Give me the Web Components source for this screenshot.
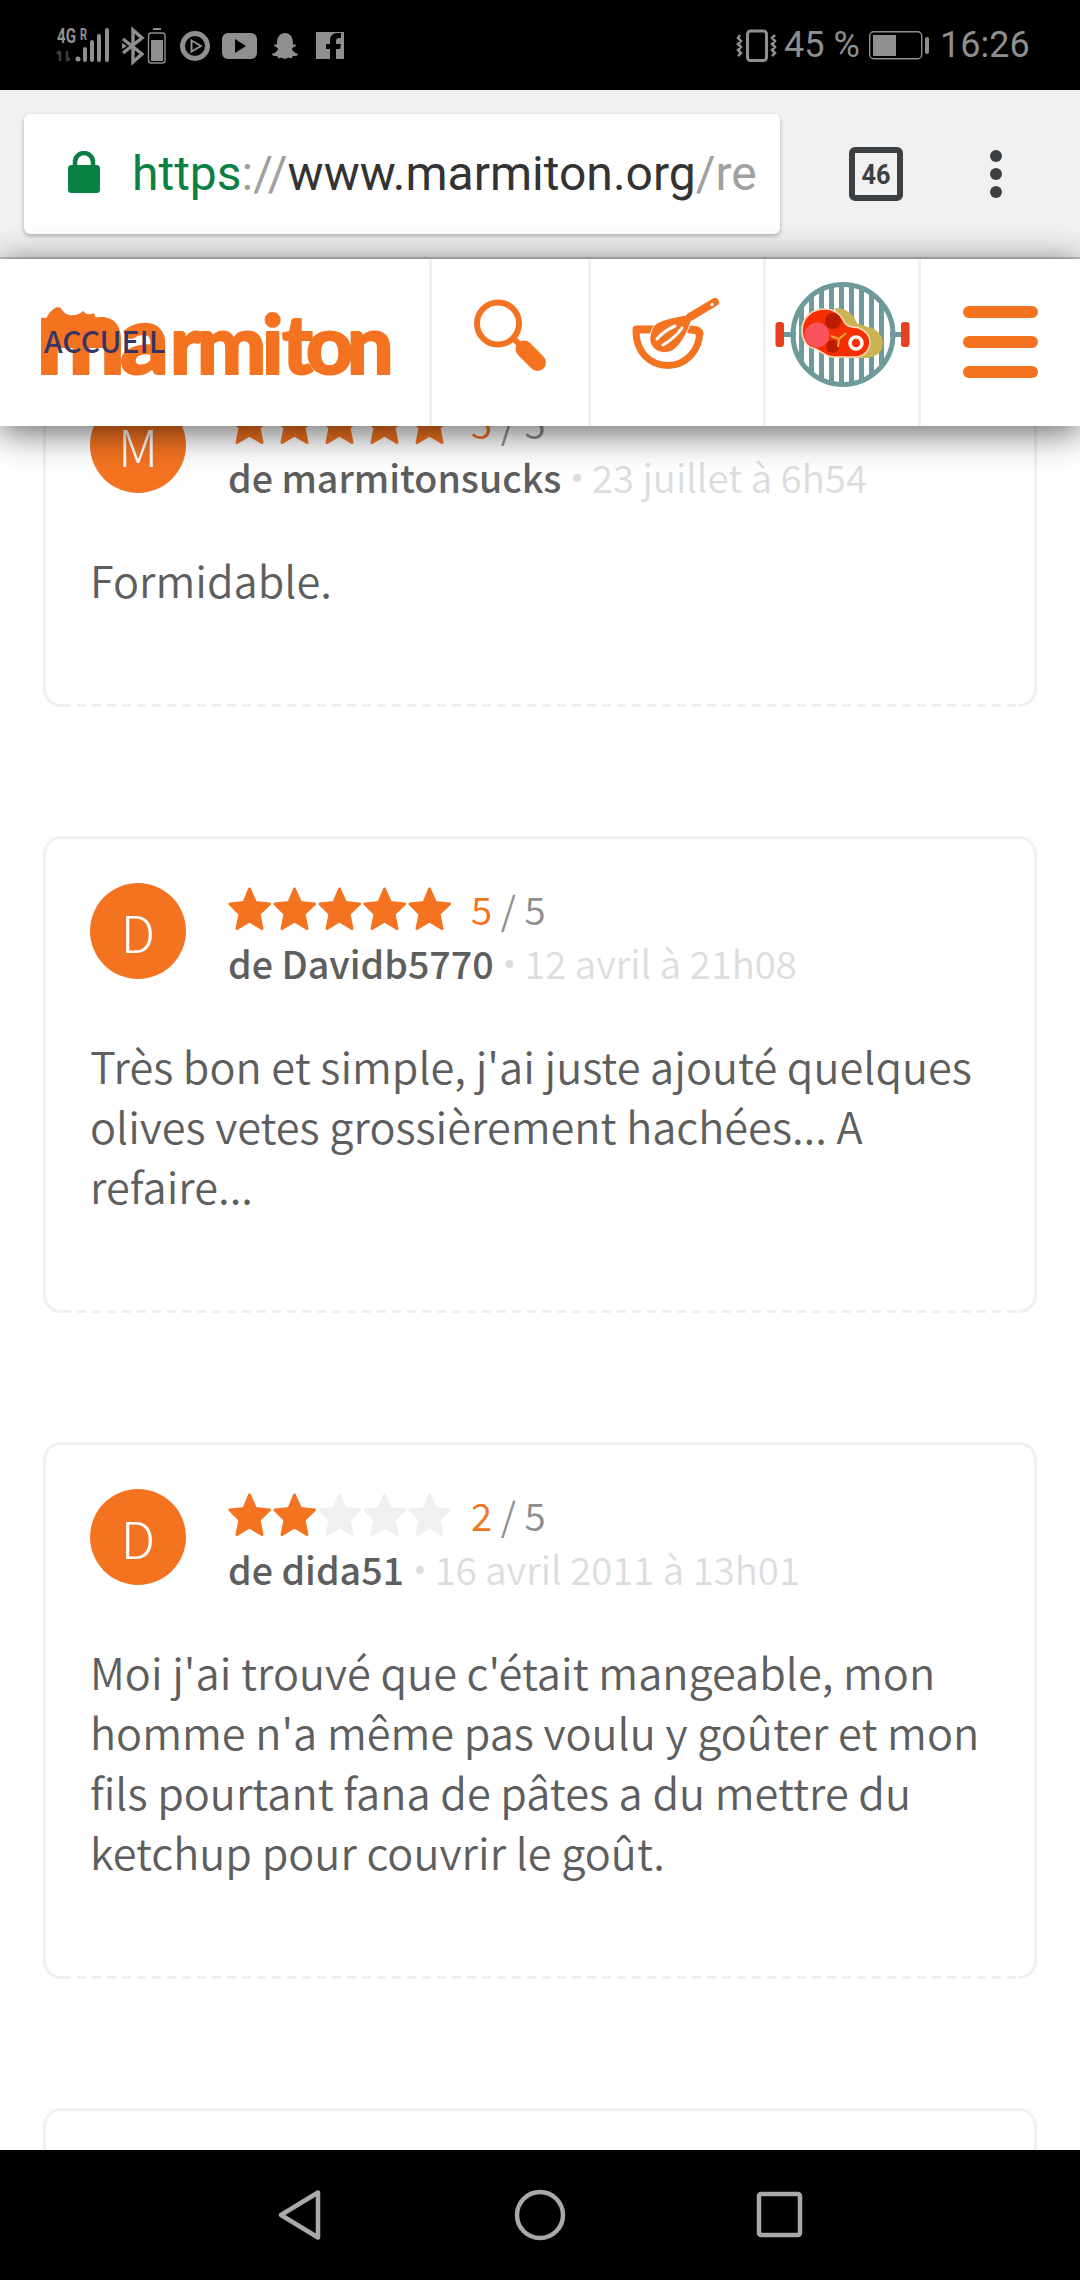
<!DOCTYPE html>
<html lang="fr">
<head>
<meta charset="utf-8">
<title>Marmiton</title>
<style>
  html, body { margin: 0; padding: 0; background: #fff; }
  body { width: 1080px; height: 2280px; overflow: hidden; display: flex; flex-direction: column; font-family: "Noto Sans CJK SC", "Noto Sans", sans-serif; }
</style>
</head>
<body>
<phone-status></phone-status>
<browser-toolbar url-host="www.marmiton.org" tabs="46"></browser-toolbar>
<site-nav></site-nav>
<review-feed>
  <review-card initial="M" rating="5" author="marmitonsucks" date="23 juillet à 6h54">Formidable.</review-card>
  <review-card initial="D" rating="5" author="Davidb5770" date="12 avril à 21h08">Très bon et simple, j'ai juste ajouté quelques olives vetes grossièrement hachées... A refaire...</review-card>
  <review-card initial="D" rating="2" author="dida51" date="16 avril 2011 à 13h01">Moi j'ai trouvé que c'était mangeable, mon homme n'a même pas voulu y goûter et mon fils pourtant fana de pâtes a du mettre du ketchup pour couvrir le goût.</review-card>
  <review-card></review-card>
</review-feed>
<phone-nav></phone-nav>

<script>
// ---------------------------------------------------------------------------
// Base
// ---------------------------------------------------------------------------

/** Renders css() and template() into an open shadow root on connect. */
class BaseElement extends HTMLElement {
  constructor() {
    super();
    this.attachShadow({ mode: 'open' });
  }
  connectedCallback() {
    this.shadowRoot.innerHTML = `<style>${this.css()}</style>${this.template()}`;
  }
  css() { return ''; }
  template() { return ''; }
}

const ORANGE = '#f47321';

// ---------------------------------------------------------------------------
// Android chrome
// ---------------------------------------------------------------------------

class PhoneStatus extends BaseElement {
  css() {
    return `
      :host { display: flex; flex: none; height: 90px; background: #000; color: #8f8f8f; font: 36px/90px Roboto, sans-serif; }
      svg { display: block; flex: none; }
      .level { flex: none; width: 74px; margin-left: 6px; white-space: nowrap; }
      .time { flex: none; width: 86px; margin-left: 11px; }
    `;
  }
  template() {
    return `
      <svg width="736" height="90" viewBox="0 0 736 90">
        <g fill="#8f8f8f">
          <text x="57" y="43" font-family="Roboto" font-weight="700" font-size="20" textLength="19" lengthAdjust="spacingAndGlyphs">4G</text>
          <text x="80" y="40" font-family="Roboto" font-weight="700" font-size="16" textLength="7" lengthAdjust="spacingAndGlyphs">R</text>
          <circle cx="78" cy="59" r="2.500"/>
          <rect x="83" y="47" width="4" height="15" rx="2"/>
          <rect x="90" y="40" width="4" height="22" rx="2"/>
          <rect x="97" y="34" width="4" height="28" rx="2"/>
          <rect x="105" y="28" width="4" height="34" rx="2"/>
        </g>
        <path d="M60 51v10M57 54l3-3M67 61V51M67 61l3-3" stroke="#3d3d3d" stroke-width="2.500" fill="none"/>
        <path d="M123 39l19 15-9 8V30l9 8-19 15" fill="none" stroke="#8f8f8f" stroke-width="3.400"/>
        <path d="M122 43l5 3-5 3z" fill="#8f8f8f"/>
        <g fill="#8f8f8f">
          <rect x="153" y="28" width="8" height="2"/>
          <rect x="148.500" y="33" width="16.500" height="30" rx="2.500" fill="none" stroke="#8f8f8f" stroke-width="1.400"/>
          <rect x="151" y="40" width="12" height="21"/>
        </g>
        <circle cx="195" cy="46" r="12.500" fill="none" stroke="#8f8f8f" stroke-width="5"/>
        <path d="M191.500 40.500l9.500 5.500-9.500 5.500z" fill="none" stroke="#8f8f8f" stroke-width="2"/>
        <rect x="222" y="33" width="35" height="26" rx="6" fill="#8f8f8f"/>
        <path d="M235 39l11 7-11 7z" fill="#000"/>
        <path d="M285 33c6 0 8 5 8 11 0 1 3 0 3 1 0 2-4 2-4 4 0 1 2 4 6 5 0 2-3 2-5 2-1 2-2 3-3 2-3-1-4 1-5 1s-2-2-5-1c-1 1-2 0-3-2-2 0-5 0-5-2 4-1 6-4 6-5 0-2-4-2-4-4 0-1 3 0 3-1 0-6 2-11 8-11z" fill="#8f8f8f"/>
        <path d="M316 32h28v27h-8V49h4l1-5h-5v-3c0-2 1-3 3-3h2v-5h-4c-4 0-7 3-7 7v4h-4v5h4v10h-14z" fill="#8f8f8f"/>
      </svg>
      <svg width="42" height="90" viewBox="736 0 42 90">
        <rect x="747.500" y="31" width="19" height="29.500" rx="3" fill="none" stroke="#8f8f8f" stroke-width="3"/>
        <path d="M740 35l-2 3 3 3-3 3 3 3-3 3 3 3-3 3M775 35l-3 3 3 3-3 3 3 3-3 3 3 3-3 3" fill="none" stroke="#8f8f8f" stroke-width="2.500"/>
      </svg>
      <span class="level">45 %</span>
      <svg width="60" height="90" viewBox="869 0 60 90" style="margin-left:11px">
        <rect x="869.700" y="31.700" width="52" height="27" rx="4" fill="none" stroke="#8f8f8f" stroke-width="1.400"/>
        <rect x="873" y="35" width="23" height="21" fill="#8f8f8f"/>
        <rect x="925" y="37" width="4" height="17" rx="2" fill="#8f8f8f"/>
      </svg>
      <span class="time">16:26</span>
    `;
  }
}
customElements.define('phone-status', PhoneStatus);

class BrowserToolbar extends BaseElement {
  css() {
    return `
      :host { display: flex; align-items: center; flex: none; box-sizing: border-box; height: 169px; padding: 0 0 0 24px; background: #f1f1f1; border-bottom: 2px solid #c4c4c4; }
      .omnibox { display: flex; align-items: center; box-sizing: border-box; width: 756px; height: 120px; padding-left: 44px; background: #fff; border-radius: 6px; box-shadow: 0 2px 4px rgba(0,0,0,.28); overflow: hidden; white-space: nowrap; font: 48px/120px Roboto, sans-serif; color: #333; }
      .omnibox svg { flex: none; margin-right: 32px; margin-top: -4px; }
      .scheme { color: #0b8043; }
      .dim { color: #a0a0a0; }
      .tabs { flex: none; margin-left: 69px; display: block; }
      .more { flex: none; margin-left: 87px; display: block; }
    `;
  }
  template() {
    const host = this.getAttribute('url-host');
    const tabs = this.getAttribute('tabs');
    return `
      <div class="omnibox">
        <svg width="32" height="42" viewBox="0 0 32 42">
          <path d="M7 17v-6a9 9 0 0 1 18 0v6" fill="none" stroke="#0b8043" stroke-width="4.500"/>
          <rect x="0" y="14" width="32" height="28" rx="3.500" fill="#0b8043"/>
        </svg>
        <span><span class="scheme">https</span><span class="dim">://</span>${host}<span class="dim">/re</span></span>
      </div>
      <svg class="tabs" width="54" height="54" viewBox="0 0 54 54">
        <rect x="3" y="3" width="48" height="48" rx="3" fill="none" stroke="#3c4043" stroke-width="6"/>
        <text x="27" y="37" text-anchor="middle" fill="#3c4043" font-family="Roboto" font-weight="700" font-size="28" textLength="29" lengthAdjust="spacingAndGlyphs">${tabs}</text>
      </svg>
      <svg class="more" width="12" height="48" viewBox="0 0 12 48">
        <circle cx="6" cy="6" r="6" fill="#3c4043"/><circle cx="6" cy="24" r="6" fill="#3c4043"/><circle cx="6" cy="42" r="6" fill="#3c4043"/>
      </svg>
    `;
  }
}
customElements.define('browser-toolbar', BrowserToolbar);

class PhoneNav extends BaseElement {
  css() {
    return `
      :host { display: block; flex: none; height: 130px; background: #000; position: relative; z-index: 3; }
      svg { display: block; }
    `;
  }
  template() {
    return `
      <svg width="1080" height="130" viewBox="0 2150 1080 130" fill="none" stroke="#a9a9a9" stroke-width="4.500" stroke-linejoin="round">
        <path d="M318 2192.500v45l-37-22.500z"/>
        <circle cx="540" cy="2215" r="23"/>
        <rect x="759" y="2194" width="41" height="41" rx="2"/>
      </svg>
    `;
  }
}
customElements.define('phone-nav', PhoneNav);

// ---------------------------------------------------------------------------
// Site header
// ---------------------------------------------------------------------------

class SiteNav extends BaseElement {
  css() {
    return `
      :host { display: flex; flex: none; height: 167px; position: relative; z-index: 2; background: #fff; box-shadow: 0 6px 34px rgba(0,0,0,.62); }
      .cell { flex: none; border-left: 3px solid #f1f1f1; box-sizing: border-box; }
      .cell svg { display: block; }
      .logo { position: relative; flex: none; width: 429px; }
      .logo svg { display: block; }
      /* the unstyled link label sits on top of the logo in the reference */
      .logo a { position: absolute; left: 44px; top: 59px; font: 500 30px/44px "Noto Sans CJK SC", sans-serif; color: #353465; }
    `;
  }
  template() {
    return `
      <div class="logo">
        <svg width="429" height="167" viewBox="0 259 429 167">
          <path fill="${ORANGE}" d="M43 348C42 325 46 312 57 307L61 308C64 316 76 318 83 311C86 315 90 315 94 313C96 322 104 328 111 328L118 337V348Z"/>
          <text y="374" x="36 120 170 197 262 282 306 347" fill="${ORANGE}" stroke="${ORANGE}" stroke-width="2" stroke-linejoin="round" font-family="Lato" font-weight="900" font-size="82"><tspan font-size="106">m</tspan><tspan font-size="96">a</tspan>rmiton</text>
        </svg>
        <a>ACCUEIL</a>
      </div>
      <div class="cell" style="width:159px">
        <svg width="156" height="167" viewBox="432 259 156 167">
          <circle cx="498" cy="323.500" r="21" fill="none" stroke="${ORANGE}" stroke-width="6"/>
          <path d="M515 340l7 7" stroke="${ORANGE}" stroke-width="6"/>
          <path d="M524 349l13.500 13.500" stroke="${ORANGE}" stroke-width="17" stroke-linecap="round"/>
        </svg>
      </div>
      <div class="cell" style="width:175px">
        <svg width="172" height="167" viewBox="591 259 172 167">
          <path d="M636 331C636 352 650 365.500 668 365.500C686 365.500 699.500 350 699.500 333" fill="none" stroke="${ORANGE}" stroke-width="7"/>
          <path d="M636.500 329.500h22M690 329.500c5 0 9 1 9.500 4" fill="none" stroke="${ORANGE}" stroke-width="8" stroke-linecap="round"/>
          <path d="M657 323C667 318 680 316 693 314C690 328 682 345 672 351C660 356 648 348 650 336C651 330 653 326 657 323Z" fill="${ORANGE}" stroke="#fff" stroke-width="1"/>
          <path d="M690 317L715 302" stroke="${ORANGE}" stroke-width="8" stroke-linecap="round"/>
          <path d="M657 339c5-6 11-10 18-13M663 345c7-4 14-10 19-17" stroke="#fff" stroke-width="3" stroke-linecap="round" fill="none"/>
          <circle cx="712" cy="304.500" r="1.700" fill="#fff"/>
        </svg>
      </div>
      <div class="cell" style="width:155px">
        <svg width="152" height="167" viewBox="766 259 152 167">
          <defs><clipPath id="g"><circle cx="843" cy="334.500" r="51"/></clipPath></defs>
          <g fill="#6f9a9b">
            <rect x="782" y="332" width="14" height="5"/><rect x="890" y="332" width="14" height="5"/>
            <g clip-path="url(#g)">
              <rect x="799" y="280" width="5" height="110"/><rect x="809" y="280" width="5" height="110"/><rect x="819" y="280" width="5" height="110"/><rect x="829" y="280" width="5" height="110"/><rect x="839" y="280" width="5" height="110"/><rect x="849" y="280" width="5" height="110"/><rect x="859" y="280" width="5" height="110"/><rect x="869" y="280" width="5" height="110"/><rect x="879" y="280" width="5" height="110"/>
            </g>
          </g>
          <circle cx="843" cy="334.500" r="50" fill="none" stroke="#6f9a9b" stroke-width="5"/>
          <rect x="775.500" y="322" width="8.500" height="25" rx="3" fill="#e8411f"/>
          <rect x="901" y="322" width="8.500" height="25" rx="3" fill="#e8411f"/>
          <path d="M835 308c10 0 18 5 22 15 6 4 16 3 22 10 5 6 5 14 1 19-4 4-9 6-14 6h-20z" fill="#cdb452"/>
          <path d="M825 309c9 0 16 6 20 14 4 6 9 3 14 5 7 3 11 8 11 14 0 8-6 15-15 15h-21c-9 0-13-7-21-9-6-1-11-9-11-17 0-14 10-22 23-22z" fill="#f52e04" stroke="#fbd9b8" stroke-width="1.700"/>
          <circle cx="817" cy="335" r="12.500" fill="#f9525a"/>
          <circle cx="833" cy="321" r="8" fill="#b91c00"/>
          <circle cx="832.500" cy="346.500" r="6.500" fill="#b91c00"/>
          <circle cx="856" cy="343" r="6" fill="#f52e04" stroke="#fff" stroke-width="3.500"/>
          <path d="M831 336l8 3 7-6M839 339l-1 8" fill="none" stroke="#e9a838" stroke-width="2"/>
        </svg>
      </div>
      <div class="cell" style="flex:1">
        <svg width="158" height="167" viewBox="921 259 158 167">
          <g fill="${ORANGE}">
            <rect x="963" y="306" width="75" height="12" rx="6"/>
            <rect x="963" y="336" width="75" height="12" rx="6"/>
            <rect x="963" y="366" width="75" height="12" rx="6"/>
          </g>
        </svg>
      </div>
    `;
  }
}
customElements.define('site-nav', SiteNav);

// ---------------------------------------------------------------------------
// Reviews
// ---------------------------------------------------------------------------

class StarRating extends BaseElement {
  css() {
    return `
      :host { display: inline-flex; gap: 2px; }
      svg { display: block; }
      .on { fill: ${ORANGE}; stroke: ${ORANGE}; }
      .off { fill: #f0f0f0; stroke: #f0f0f0; }
    `;
  }
  template() {
    const value = Number(this.getAttribute('value'));
    return [1, 2, 3, 4, 5].map((n) => `
      <svg width="43" height="43" viewBox="0 0 43 43">
        <path class="${n <= value ? 'on' : 'off'}" stroke-width="3" stroke-linejoin="round"
          d="M21.500 2l6 13.500 14 1.500-10.500 10 3 14.500-12.500-7.500-12.500 7.500 3-14.500L2 17l14-1.500z"/>
      </svg>`).join('');
  }
}
customElements.define('star-rating', StarRating);

class ReviewCard extends BaseElement {
  css() {
    return `
      :host { display: block; position: relative; box-sizing: border-box; width: 994px; padding: 44px 44px 95px; background: #fff; border: 3px solid #f0f0f0; border-radius: 18px; color: #5e5e5e; }
      /* dash pattern of the bottom edge, wider than what border-style gives */
      :host::after { content: ""; position: absolute; left: 16px; right: 16px; bottom: -3px; height: 3px; background: repeating-linear-gradient(90deg, #f0f0f0 0 9px, #fff 9px 15px); }
      .head { display: flex; gap: 42px; height: 96px; }
      .avatar { flex: none; width: 96px; height: 96px; border-radius: 50%; background: ${ORANGE}; color: #fff; font-size: 51px; line-height: 96px; text-align: center; font-weight: 300; }
      .meta { display: flex; flex-direction: column; margin-top: 4px; }
      .stars { display: flex; align-items: center; height: 43px; }
      .score { margin-left: 20px; font-size: 38.500px; line-height: 43px; color: #8e8e8e; white-space: pre; font-weight: 350; }
      .score b { font-weight: 350; color: ${ORANGE}; }
      .by { margin-top: 5px; font-size: 37.600px; line-height: 56px; white-space: nowrap; }
      .by b { font-weight: 500; }
      .date { color: #ddd; font-size: 38.300px; font-weight: 350; }
      .dot { margin: 0 8px 0 9px; font-family: Roboto, sans-serif; font-size: 42px; }
      .text { margin-top: 56px; font-size: 43.300px; line-height: 60px; font-weight: 350; }
    `;
  }
  template() {
    if (!this.hasAttribute('author')) return '';
    const rating = this.getAttribute('rating');
    return `
      <div class="head">
        <div class="avatar">${this.getAttribute('initial')}</div>
        <div class="meta">
          <div class="stars"><star-rating value="${rating}"></star-rating><span class="score"><b>${rating}</b> / 5</span></div>
          <div class="by"><b>de ${this.getAttribute('author')}</b><span class="date"><span class="dot">•</span>${this.getAttribute('date')}</span></div>
        </div>
      </div>
      <div class="text"><slot></slot></div>
    `;
  }
}
customElements.define('review-card', ReviewCard);

class ReviewFeed extends BaseElement {
  css() {
    return `
      :host { display: flex; flex-direction: column; flex: 1; min-height: 0; overflow: hidden; gap: 129px; margin-top: -76px; padding: 0 0 0 43px; position: relative; z-index: 1; background: #fff; }
      ::slotted(review-card) { flex: none; }
      ::slotted(review-card:last-child) { height: 300px; }
    `;
  }
  template() { return '<slot></slot>'; }
}
customElements.define('review-feed', ReviewFeed);
</script>
</body>
</html>
